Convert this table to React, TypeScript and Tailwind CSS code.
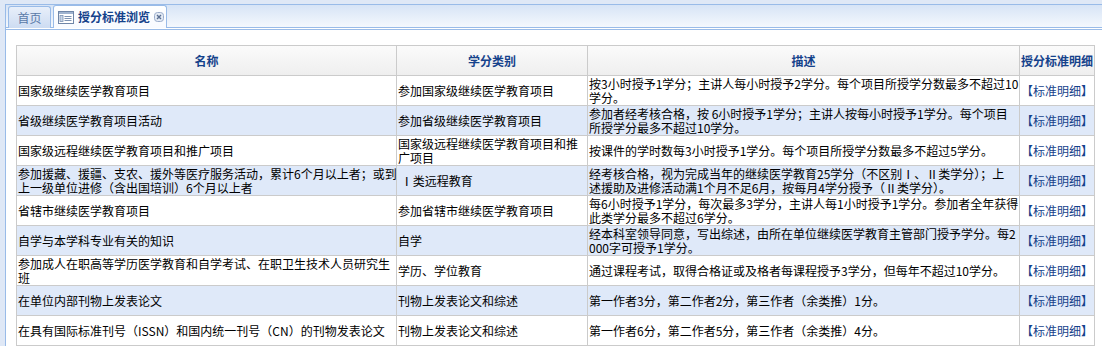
import React from 'react'

type Row = { name: string[]; kind: string[]; desc: string[] }

const rows: Row[] = [
  {
    name: ['国家级继续医学教育项目'],
    kind: ['参加国家级继续医学教育项目'],
    desc: ['按3小时授予1学分；主讲人每小时授予2学分。每个项目所授学分数最多不超过10', '学分。'],
  },
  {
    name: ['省级继续医学教育项目活动'],
    kind: ['参加省级继续医学教育项目'],
    desc: ['参加者经考核合格，按 6小时授予1学分；主讲人按每小时授予1学分。每个项目', '所授学分最多不超过10学分。'],
  },
  {
    name: ['国家级远程继续医学教育项目和推广项目'],
    kind: ['国家级远程继续医学教育项目和推', '广项目'],
    desc: ['按课件的学时数每3小时授予1学分。每个项目所授学分数最多不超过5学分。'],
  },
  {
    name: ['参加援藏、援疆、支农、援外等医疗服务活动，累计6个月以上者；或到', '上一级单位进修（含出国培训）6个月以上者'],
    kind: [' Ⅰ类远程教育'],
    desc: ['经考核合格，视为完成当年的继续医学教育25学分（不区别Ⅰ、Ⅱ类学分）；上', '述援助及进修活动满1个月不足6月，按每月4学分授予（Ⅱ类学分）。'],
  },
  {
    name: ['省辖市继续医学教育项目'],
    kind: ['参加省辖市继续医学教育项目'],
    desc: ['每6小时授予1学分，每次最多3学分，主讲人每1小时授予1学分。参加者全年获得', '此类学分最多不超过6学分。'],
  },
  {
    name: ['自学与本学科专业有关的知识'],
    kind: ['自学'],
    desc: ['经本科室领导同意，写出综述，由所在单位继续医学教育主管部门授予学分。每2', '000字可授予1学分。'],
  },
  {
    name: ['参加成人在职高等学历医学教育和自学考试、在职卫生技术人员研究生', '班'],
    kind: ['学历、学位教育'],
    desc: ['通过课程考试，取得合格证或及格者每课程授予3学分，但每年不超过10学分。'],
  },
  {
    name: ['在单位内部刊物上发表论文'],
    kind: ['刊物上发表论文和综述'],
    desc: ['第一作者3分，第二作者2分，第三作者（余类推）1分。'],
  },
  {
    name: ['在具有国际标准刊号（ISSN）和国内统一刊号（CN）的刊物发表论文'],
    kind: ['刊物上发表论文和综述'],
    desc: ['第一作者6分，第二作者5分，第三作者（余类推）4分。'],
  },
]

function Lines({ lines }: { lines: string[] }) {
  return (
    <div className="whitespace-pre leading-[14px]">
      {lines.map((l, i) => (
        <div key={i}>{l}</div>
      ))}
    </div>
  )
}

function TabIcon() {
  return (
    <svg width="16" height="13" viewBox="0 0 16 13" className="shrink-0">
      <rect x="0.5" y="0.5" width="15" height="12" fill="#fff" stroke="#6f86a8" />
      <rect x="1" y="1" width="14" height="2" fill="#9fb3cf" />
      <rect x="2" y="4.5" width="3" height="6" fill="#c9d6e8" stroke="#7d93b3" strokeWidth="0.8" />
      <line x1="6.5" y1="5.5" x2="13.5" y2="5.5" stroke="#7d93b3" />
      <line x1="6.5" y1="7.5" x2="13.5" y2="7.5" stroke="#7d93b3" />
      <line x1="6.5" y1="9.5" x2="13.5" y2="9.5" stroke="#7d93b3" />
    </svg>
  )
}

function CloseIcon() {
  return (
    <svg width="10" height="10" viewBox="0 0 10 10" className="shrink-0">
      <rect x="0.5" y="0.5" width="9" height="9" rx="3" fill="#e4ebf5" stroke="#9aaccb" />
      <path d="M3 3 L7 7 M7 3 L3 7" stroke="#5b6f92" strokeWidth="1.4" />
    </svg>
  )
}

export default function App() {
  return (
    <div
      className="w-[1102px] h-[346px] overflow-hidden bg-[#dfe8f6] pl-[5px] pt-[4px] text-[12px] text-black"
      style={{ fontFamily: '"Noto Sans CJK SC", "Liberation Sans", sans-serif' }}
    >
      <div className="h-full border-l border-t border-[#99bbe8] flex flex-col">
        {/* 标签栏 */}
        <div className="h-[23px] shrink-0 flex items-end gap-[2px] pl-[2px] border-b border-[#99bbe8] bg-gradient-to-b from-[#d7e4f6] to-[#f4f8fd]">
          <div className="relative top-[1px] h-[22px] w-[43px] flex items-center justify-center rounded-t-[3px] border border-[#99bbe8] border-b-0 bg-gradient-to-b from-[#e8effa] to-[#cddcf2] text-[#5a79a8] whitespace-nowrap">
            首页
          </div>
          <div className="relative top-[1px] h-[23px] flex items-center gap-[4px] pl-[4px] pr-[2px] rounded-t-[3px] border border-[#99bbe8] border-b-0 bg-gradient-to-b from-[#ffffff] to-[#f7faff] whitespace-nowrap">
            <TabIcon />
            <span className="font-bold text-[#15428b] leading-[12px]">授分标准浏览</span>
            <CloseIcon />
          </div>
        </div>
        <div className="h-[2px] shrink-0 bg-white border-b border-[#99bbe8]" />

        {/* 内容 */}
        <div className="flex-1 bg-white pl-[10px] pt-[15px]">
          <table className="border-collapse table-fixed w-[1078px]">
            <colgroup>
              <col className="w-[380px]" />
              <col className="w-[191px]" />
              <col className="w-[432px]" />
              <col className="w-[75px]" />
            </colgroup>
            <thead>
              <tr className="h-[30px] bg-gradient-to-b from-[#fbfbfb] to-[#eeeeee]">
                {['名称', '学分类别', '描述', '授分标准明细'].map(h => (
                  <th
                    key={h}
                    className="border border-[#cbcbcb] p-0 text-center font-bold text-[#15428b] whitespace-nowrap overflow-visible"
                  >
                    {h}
                  </th>
                ))}
              </tr>
            </thead>
            <tbody>
              {rows.map((r, i) => (
                <tr key={i} className={`h-[30px] ${i % 2 === 1 ? 'bg-[#dfe9f9]' : 'bg-white'}`}>
                  <td className="border border-[#cbcbcb] px-[1px] py-0 align-middle">
                    <Lines lines={r.name} />
                  </td>
                  <td className="border border-[#cbcbcb] px-[1px] py-0 align-middle">
                    <Lines lines={r.kind} />
                  </td>
                  <td className="border border-[#cbcbcb] px-[1px] py-0 align-middle">
                    <Lines lines={r.desc} />
                  </td>
                  <td className="border border-[#cbcbcb] p-0 text-center align-middle whitespace-nowrap text-[#15428b]">
                    【标准明细】
                  </td>
                </tr>
              ))}
            </tbody>
          </table>
        </div>
      </div>
    </div>
  )
}
